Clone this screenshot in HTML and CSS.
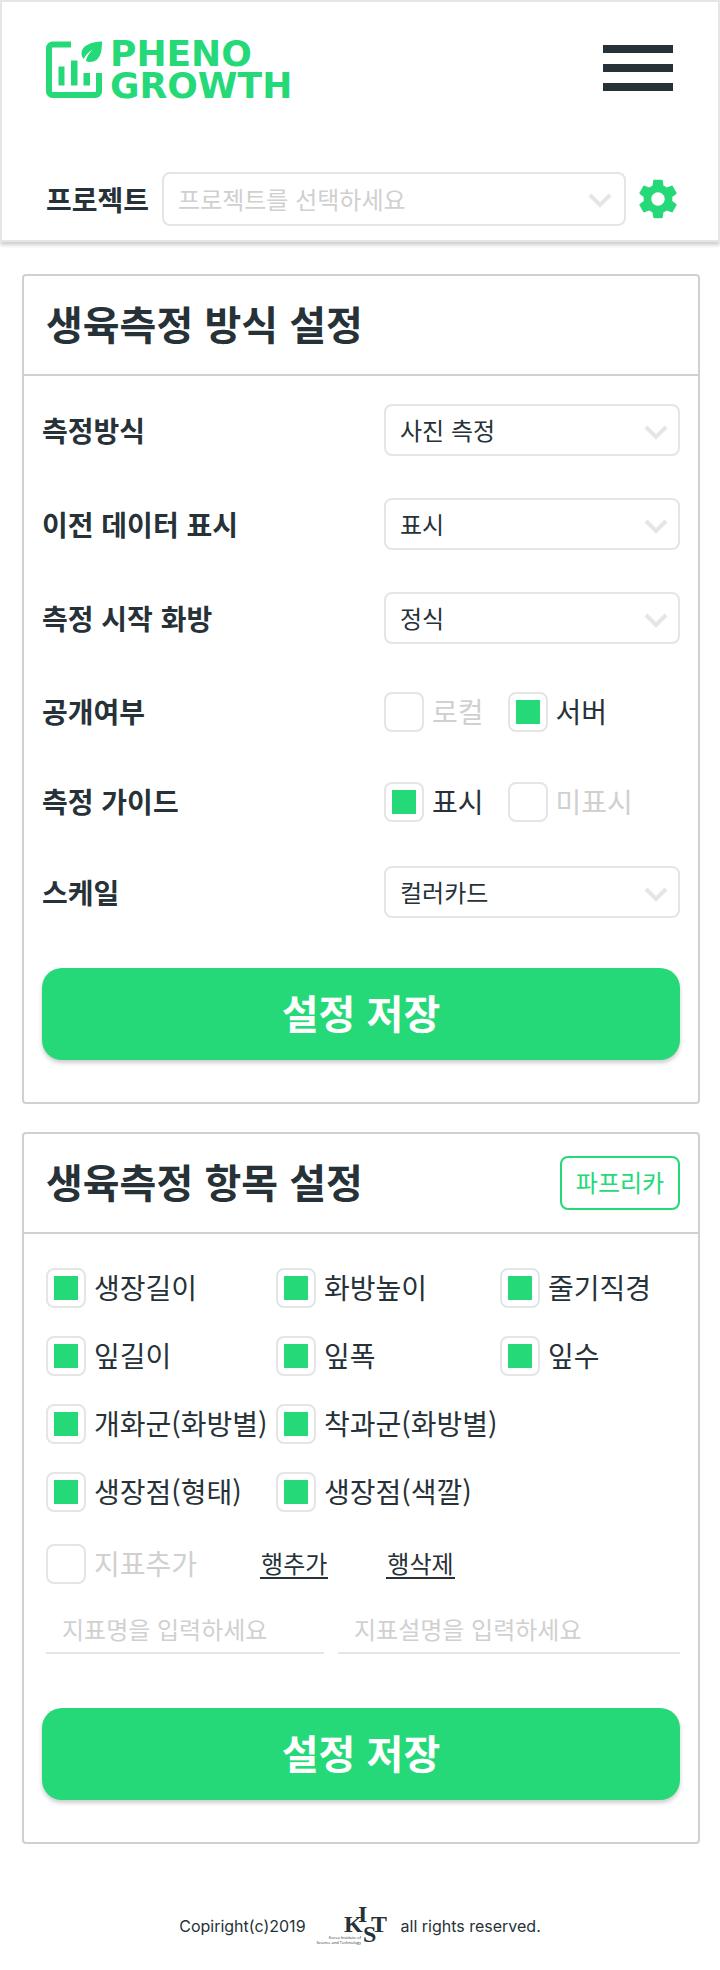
FILE: index.html
```html
<!DOCTYPE html>
<html lang="ko">
<head>
    <meta charset="UTF-8">
    <meta name="viewport" content="width=device-width, initial-scale=1.0">
    <title>PHENO GROWTH</title>
    <link rel="stylesheet" href="styles.css">
</head>
<body>
    <header class="header">
        <div class="header-top">
            <a class="logo" href="#">
                <svg width="56" height="58" viewBox="0 0 56 58">
                    <path d="M25 3.500H6.500a3.500 3.500 0 0 0-3.500 3.500V50.500a3.500 3.500 0 0 0 3.500 3.500H49.500a3.500 3.500 0 0 0 3.500-3.500V32" fill="none" stroke="#25d978" stroke-width="6"/>
                    <path d="M12.500 25.500h6v19h-6zM25 19.500h6.500v25H25zM37.500 32h6.500v12.500h-6.500z"/>
                    <path d="M56 .5C44 1 35.500 5 35.500 12.500c0 2 .8 4 2.300 5.500 1.700-4 4.700-7 9-9.500-3.300 3.300-6 7-7 11.500 3.500 1.600 7.700 1.200 10.700-1C55 15.500 56 9 56 .5z"/>
                </svg>
                <span class="logo-text">PHENO<br>GROWTH</span>
            </a>
            <button class="menu" type="button" aria-label="메뉴">
                <span></span>
                <span></span>
                <span></span>
            </button>
        </div>
        <div class="project">
            <label class="project-label" for="project">프로젝트</label>
            <div class="select-box project-select">
                <select class="select empty" id="project">
                    <option>프로젝트를 선택하세요</option>
                </select>
                <svg class="arrow" width="24" height="16" viewBox="0 0 24 16"><path d="M2 2l10 10L22 2"/></svg>
            </div>
            <button class="gear" type="button" aria-label="설정">
                <svg width="46" height="46" viewBox="0 0 24 24"><path d="M19.430 12.980c.04-.32.07-.64.07-.98s-.03-.66-.07-.98l2.110-1.650c.19-.15.24-.42.12-.64l-2-3.460c-.12-.22-.39-.3-.61-.22l-2.490 1c-.52-.4-1.080-.73-1.690-.98l-.38-2.650C14.460 2.180 14.250 2 14 2h-4c-.25 0-.46.18-.49.42l-.38 2.650c-.61.25-1.170.59-1.690.98l-2.490-1c-.23-.09-.49 0-.61.22l-2 3.460c-.13.22-.07.49.12.64l2.110 1.650c-.04.32-.07.65-.07.98s.03.66.07.98l-2.110 1.650c-.19.15-.24.42-.12.64l2 3.460c.12.22.39.3.61.22l2.490-1c.52.4 1.080.73 1.690.98l.38 2.650c.03.24.24.42.49.42h4c.25 0 .46-.18.49-.42l.38-2.650c.61-.25 1.170-.59 1.690-.98l2.490 1c.23.09.49 0 .61-.22l2-3.460c.12-.22.07-.49-.12-.64l-2.110-1.650zM12 15.500c-1.930 0-3.500-1.570-3.500-3.500s1.570-3.500 3.500-3.500 3.500 1.570 3.500 3.500-1.570 3.500-3.500 3.500z"/></svg>
            </button>
        </div>
    </header>

    <main class="content">
        <section class="card">
            <div class="card-header">
                <h2>생육측정 방식 설정</h2>
            </div>
            <form class="card-body">
                <div class="row">
                    <label class="row-label" for="method">측정방식</label>
                    <div class="select-box">
                        <select class="select" id="method">
                            <option>사진 측정</option>
                        </select>
                        <svg class="arrow" width="24" height="16" viewBox="0 0 24 16"><path d="M2 2l10 10L22 2"/></svg>
                    </div>
                </div>
                <div class="row">
                    <label class="row-label" for="previous">이전 데이터 표시</label>
                    <div class="select-box">
                        <select class="select" id="previous">
                            <option>표시</option>
                        </select>
                        <svg class="arrow" width="24" height="16" viewBox="0 0 24 16"><path d="M2 2l10 10L22 2"/></svg>
                    </div>
                </div>
                <div class="row">
                    <label class="row-label" for="start">측정 시작 화방</label>
                    <div class="select-box">
                        <select class="select" id="start">
                            <option>정식</option>
                        </select>
                        <svg class="arrow" width="24" height="16" viewBox="0 0 24 16"><path d="M2 2l10 10L22 2"/></svg>
                    </div>
                </div>
                <div class="row options" role="radiogroup" aria-labelledby="open-label">
                    <span class="row-label" id="open-label">공개여부</span>
                    <div class="choices">
                        <label class="check"><input type="radio" name="open"><span>로컬</span></label>
                        <label class="check"><input type="radio" name="open" checked><span>서버</span></label>
                    </div>
                </div>
                <div class="row options" role="radiogroup" aria-labelledby="guide-label">
                    <span class="row-label" id="guide-label">측정 가이드</span>
                    <div class="choices">
                        <label class="check"><input type="radio" name="guide" checked><span>표시</span></label>
                        <label class="check"><input type="radio" name="guide"><span>미표시</span></label>
                    </div>
                </div>
                <div class="row">
                    <label class="row-label" for="scale">스케일</label>
                    <div class="select-box">
                        <select class="select" id="scale">
                            <option>컬러카드</option>
                        </select>
                        <svg class="arrow" width="24" height="16" viewBox="0 0 24 16"><path d="M2 2l10 10L22 2"/></svg>
                    </div>
                </div>
                <button class="save" type="button">설정 저장</button>
            </form>
        </section>

        <section class="card">
            <div class="card-header">
                <h2>생육측정 항목 설정</h2>
                <button class="crop" type="button">파프리카</button>
            </div>
            <form class="card-body items-body">
                <div class="items">
                    <label class="check"><input type="checkbox" checked><span>생장길이</span></label>
                    <label class="check"><input type="checkbox" checked><span>화방높이</span></label>
                    <label class="check"><input type="checkbox" checked><span>줄기직경</span></label>
                    <label class="check"><input type="checkbox" checked><span>잎길이</span></label>
                    <label class="check"><input type="checkbox" checked><span>잎폭</span></label>
                    <label class="check"><input type="checkbox" checked><span>잎수</span></label>
                    <label class="check"><input type="checkbox" checked><span>개화군(화방별)</span></label>
                    <label class="check"><input type="checkbox" checked><span>착과군(화방별)</span></label>
                    <label class="check first"><input type="checkbox" checked><span>생장점(형태)</span></label>
                    <label class="check"><input type="checkbox" checked><span>생장점(색깔)</span></label>
                </div>
                <div class="add-row">
                    <label class="check"><input type="checkbox"><span>지표추가</span></label>
                    <div class="row-buttons">
                        <button type="button">행추가</button>
                        <button type="button">행삭제</button>
                    </div>
                </div>
                <div class="fields">
                    <input type="text" placeholder="지표명을 입력하세요" aria-label="지표명">
                    <input type="text" placeholder="지표설명을 입력하세요" aria-label="지표설명">
                </div>
                <button class="save" type="button">설정 저장</button>
            </form>
        </section>
    </main>

    <footer class="footer">
        <span>Copiright(c)2019</span>
        <svg class="kist" width="72" height="42" viewBox="0 0 72 42">
            <text class="kist-letter" x="28" y="27">K</text>
            <text class="kist-letter" x="42" y="17">I</text>
            <text class="kist-letter" x="55" y="27">T</text>
            <text class="kist-letter" x="47" y="37">S</text>
            <text class="kist-small" x="45" y="34">Korea Institute of</text>
            <text class="kist-small" x="45" y="39">Science and Technology</text>
        </svg>
        <span>all rights reserved.</span>
    </footer>
</body>
</html>
```

FILE: styles.css
```css
* {
    box-sizing: border-box;
}

body {
    margin: 0;
    background-color: #fff;
    color: #263238;
    font-family: "Noto Sans CJK KR", "Noto Sans", sans-serif;
    font-size: 28px;
    line-height: 40px;
}

button,
input,
select {
    font-family: inherit;
    color: inherit;
}

button {
    padding: 0;
    border: none;
    background: none;
    cursor: pointer;
}

svg {
    display: block;
}

/* Header */
.header {
    padding: 39px 37px 14px 44px;
    border: 2px solid #e5e5e5;
    box-shadow: 0 3px 4px rgba(0, 0, 0, 0.2);
}

.header-top {
    display: flex;
    justify-content: space-between;
    align-items: flex-start;
    height: 131px;
}

.logo {
    display: flex;
    align-items: center;
    gap: 8px;
    height: 58px;
    color: #25d978;
    text-decoration: none;
}

.logo svg {
    fill: #25d978;
}

.logo-text {
    font-family: "DejaVu Sans", sans-serif;
    font-size: 36px;
    font-weight: 700;
    line-height: 32px;
}

.menu {
    display: flex;
    flex-direction: column;
    gap: 11px;
    padding: 4px 8px;
}

.menu span {
    width: 70px;
    height: 8px;
    background-color: #263238;
}

.project {
    display: flex;
    align-items: center;
}

.project-label {
    margin-right: 13px;
    font-weight: 700;
}

.gear {
    margin-left: 9px;
    fill: #25d978;
}

/* Select */
.select-box {
    position: relative;
    width: 296px;
}

.project-select {
    flex: 1;
}

.select {
    appearance: none;
    display: block;
    width: 100%;
    height: 52px;
    padding: 0 48px 2px 14px;
    border: 2px solid #e5e5e5;
    border-radius: 8px;
    background-color: #fff;
    font-size: 24px;
}

.project-select .select {
    height: 54px;
}

.select.empty {
    color: #d0d0d0;
}

.arrow {
    position: absolute;
    top: 21px;
    right: 12px;
    fill: none;
    stroke: #e5e5e5;
    stroke-width: 4px;
    pointer-events: none;
}

.project-select .arrow {
    right: 14px;
}

/* Cards */
.content {
    display: flex;
    flex-direction: column;
    gap: 28px;
    padding: 32px 20px 0 22px;
}

.card {
    border: 2px solid #d0d0d0;
    border-radius: 4px;
}

.card-header {
    display: flex;
    justify-content: space-between;
    align-items: center;
    height: 100px;
    padding: 0 18px 0 22px;
    border-bottom: 2px solid #d0d0d0;
}

.card-header h2 {
    margin: 0;
    padding-bottom: 4px;
    font-size: 40px;
    line-height: 60px;
}

.card-body {
    padding: 28px 18px 42px;
}

.row {
    display: flex;
    justify-content: space-between;
    align-items: center;
    height: 52px;
    margin-bottom: 42px;
}

.row.options {
    margin-bottom: 38px;
}

.row-label {
    font-weight: 700;
}

.choices {
    display: flex;
    gap: 24px;
    width: 296px;
}

/* Check boxes and radios */
.check {
    display: flex;
    align-items: center;
    gap: 8px;
    white-space: nowrap;
}

.check span,
.options .row-label {
    padding-bottom: 2px;
}

.check input {
    appearance: none;
    flex: none;
    width: 40px;
    height: 40px;
    margin: 0;
    padding: 6px;
    border: 2px solid #e5e5e5;
    border-radius: 8px;
}

.check input:checked {
    background: #25d978 content-box;
}

.check input:not(:checked) + span {
    color: #d0d0d0;
}

.save {
    display: block;
    width: 100%;
    height: 92px;
    margin-top: 50px;
    padding-bottom: 4px;
    border-radius: 20px;
    background-color: #25d978;
    box-shadow: 0 3px 4px rgba(0, 0, 0, 0.2);
    color: #fff;
    font-size: 40px;
    font-weight: 700;
}

/* Items */
.crop {
    width: 120px;
    height: 54px;
    padding-bottom: 4px;
    border: 2px solid #25d978;
    border-radius: 8px;
    color: #25d978;
    font-size: 24px;
}

.items-body {
    padding-top: 34px;
}

.items {
    display: grid;
    grid-template-columns: 230fr 224fr 180fr;
    grid-auto-rows: 40px;
    gap: 28px 0;
    padding-left: 4px;
}

.items .first {
    grid-column: 1;
}

.add-row {
    display: flex;
    align-items: center;
    gap: 63px;
    height: 40px;
    margin-top: 32px;
    padding-left: 4px;
}

.row-buttons {
    display: flex;
    gap: 58px;
}

.row-buttons button {
    padding: 0 1px;
    border-bottom: 2px solid #263238;
    font-size: 24px;
    line-height: 28px;
}

.fields {
    display: grid;
    grid-template-columns: 278fr 342fr;
    gap: 14px;
    margin-top: 22px;
    padding-left: 4px;
}

.fields input {
    width: 100%;
    height: 48px;
    padding: 0 16px 2px;
    border: none;
    border-bottom: 2px solid #e5e5e5;
    background: none;
    font-size: 24px;
}

.fields input::placeholder {
    color: #d0d0d0;
}

.items-body .save {
    margin-top: 54px;
}

/* Footer */
.footer {
    display: flex;
    justify-content: center;
    align-items: center;
    padding: 61px 0 23px;
    font-family: Inter, sans-serif;
    font-size: 16px;
}

.kist {
    margin: 0 13px 0 10px;
    overflow: visible;
    fill: #263238;
}

.kist-letter {
    font-family: "Liberation Serif", serif;
    font-size: 24px;
    font-weight: 700;
}

.kist-small {
    font-family: "Open Sans", sans-serif;
    font-size: 4px;
    text-anchor: end;
}
```
